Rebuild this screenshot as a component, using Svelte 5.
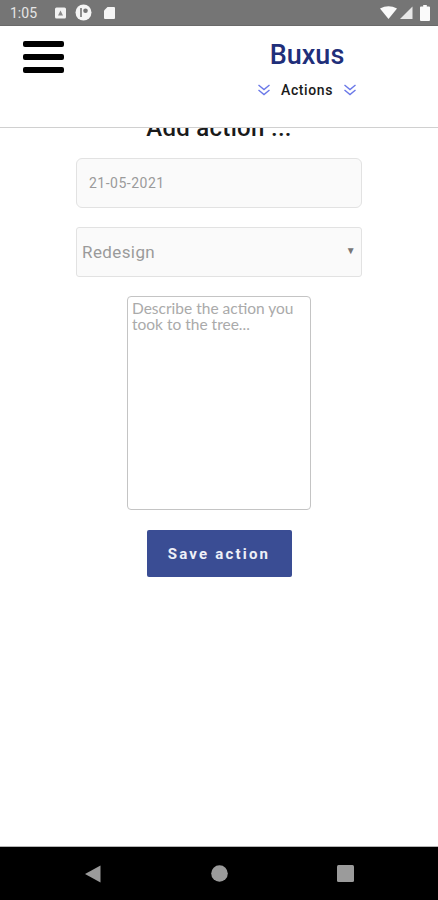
<script lang="ts">
	let date = '21-05-2021';
	let actionType = 'Redesign';
</script>

<div class="phone">
	<div class="status">
		<span class="time">1:05</span>
		<svg class="ico" width="14" height="14" viewBox="0 0 14 14">
			<rect x="1" y="1.5" width="11" height="11" rx="1.5" fill="#f2f2f2" />
			<path d="M6.5 4.5 L9 9.5 H4 Z" fill="#8a8a8a" />
		</svg>
		<svg class="ico" width="17" height="17" viewBox="0 0 17 17">
			<circle cx="8.5" cy="8.5" r="8" fill="#f5f5f5" />
			<path d="M6 4 V13" stroke="#757575" stroke-width="1.6" />
			<circle cx="10.5" cy="6.8" r="2.3" fill="#757575" />
		</svg>
		<svg class="card" width="13" height="14" viewBox="0 0 13 14">
			<path d="M4.5 1 H11 a1 1 0 0 1 1 1 V12 a1 1 0 0 1 -1 1 H2 a1 1 0 0 1 -1 -1 V4.5 Z" fill="#f5f5f5" />
		</svg>
		<span class="spacer"></span>
		<svg width="17" height="13" viewBox="0 0 17 13">
			<path d="M0 2.5 Q8.5 -2 17 2.5 L8.5 13 Z" fill="#fafafa" />
		</svg>
		<svg class="signal" width="13" height="13" viewBox="0 0 13 13">
			<path d="M12.5 0.5 V13 H0 Z" fill="#e8e8e8" />
		</svg>
		<svg class="battery" width="10" height="16" viewBox="0 0 10 16">
			<path d="M3.2 0 H6.8 V1.5 H9 a1 1 0 0 1 1 1 V15 a1 1 0 0 1 -1 1 H1 a1 1 0 0 1 -1 -1 V2.5 a1 1 0 0 1 1 -1 H3.2 Z" fill="#fafafa" />
		</svg>
	</div>

	<header>
		<div class="burger"><span></span><span></span><span></span></div>
		<div class="brand">
			<div class="title">Buxus</div>
			<div class="sub">
				<svg width="14" height="14" viewBox="0 0 14 14" fill="none" stroke="#6a78e8" stroke-width="1.4">
					<path d="M1.5 2 L7 6.5 L12.5 2" /><path d="M1.5 7 L7 11.5 L12.5 7" />
				</svg>
				<span>Actions</span>
				<svg width="14" height="14" viewBox="0 0 14 14" fill="none" stroke="#6a78e8" stroke-width="1.4">
					<path d="M1.5 2 L7 6.5 L12.5 2" /><path d="M1.5 7 L7 11.5 L12.5 7" />
				</svg>
			</div>
		</div>
	</header>

	<main>
		<h2>Add action ...</h2>
		<div class="field date">{date}</div>
		<div class="field select">
			<span>{actionType}</span>
			<i>▼</i>
		</div>
		<textarea placeholder="Describe the action you took to the tree..."></textarea>
		<button>Save action</button>
	</main>

	<nav>
		<svg width="17" height="18" viewBox="0 0 17 18"><path d="M16.5 0.5 V17.5 L1 9 Z" fill="#9b9b9b" /></svg>
		<svg width="17" height="17" viewBox="0 0 17 17"><circle cx="8.5" cy="8.5" r="8.3" fill="#9b9b9b" /></svg>
		<svg width="17" height="17" viewBox="0 0 17 17"><rect width="17" height="17" rx="1.5" fill="#9b9b9b" /></svg>
	</nav>
</div>

<style>
	:global(body) {
		margin: 0;
		background: #fff;
	}

	.phone {
		width: 438px;
		height: 900px;
		display: flex;
		flex-direction: column;
		overflow: hidden;
		font-family: Roboto, 'Liberation Sans', sans-serif;
	}

	.status {
		height: 26px;
		flex: none;
		box-sizing: border-box;
		background: #757575;
		border-bottom: 1px solid #6a6a6a;
		display: flex;
		align-items: center;
		padding: 0 8px 0 10px;
	}

	.time {
		color: #e6e6e6;
		font-size: 14px;
		width: 44px;
	}

	.ico {
		margin-right: 7px;
	}

	.card {
		margin-left: 4px;
	}

	.spacer {
		flex: 1;
	}

	.signal {
		margin-left: 3px;
		margin-right: 7px;
	}

	header {
		height: 102px;
		flex: none;
		box-sizing: border-box;
		border-bottom: 1px solid #d0d0d0;
		background: #fff;
		position: relative;
		z-index: 1;
		display: flex;
		padding: 15px 0 0 23px;
	}

	.burger {
		width: 41px;
		display: flex;
		flex-direction: column;
		gap: 7px;
	}

	.burger span {
		height: 6px;
		background: #000;
		border-radius: 2px;
	}

	.brand {
		margin-left: 191px;
		width: 104px;
		display: flex;
		flex-direction: column;
		align-items: center;
	}

	.title {
		color: #1f2f7a;
		font-size: 27px;
		font-weight: 500;
		line-height: 28px;
	}

	.sub {
		margin-top: 13px;
		display: flex;
		align-items: center;
		gap: 10px;
		font-size: 14px;
		font-weight: 500;
		letter-spacing: 0.6px;
		color: #1a1a1a;
		white-space: nowrap;
	}

	main {
		flex: 1;
		min-height: 0;
		overflow: hidden;
		display: flex;
		flex-direction: column;
		align-items: center;
		background: #fff;
	}

	h2 {
		margin: -14px 0 0;
		font-size: 24px;
		line-height: 28px;
		font-weight: 500;
		color: #1a1a1a;
		letter-spacing: 0.3px;
	}

	.field {
		width: 286px;
		height: 50px;
		flex: none;
		box-sizing: border-box;
		background: #fafafa;
		border: 1px solid #e2e2e2;
		border-radius: 6px;
		display: flex;
		align-items: center;
		color: #9a9a9a;
	}

	.date {
		margin-top: 16px;
		padding-left: 12px;
		font-size: 14px;
		letter-spacing: 0.5px;
	}

	.select {
		margin-top: 19px;
		padding: 0 5px;
		font-size: 17px;
		letter-spacing: 0.4px;
		justify-content: space-between;
		border-radius: 3px;
	}

	.select i {
		font-style: normal;
		font-size: 10px;
		color: #777;
		margin-bottom: 4px;
	}

	textarea {
		margin-top: 19px;
		width: 184px;
		height: 214px;
		flex: none;
		box-sizing: border-box;
		padding: 4px;
		border: 1.5px solid #c4c4c4;
		border-radius: 4px;
		background: #fff;
		font-family: Lato, 'Open Sans', sans-serif;
		font-size: 15.5px;
		line-height: 15.5px;
		resize: none;
		outline: none;
	}

	textarea::placeholder {
		color: #aaa;
		opacity: 1;
	}

	button {
		margin-top: 20px;
		width: 145px;
		height: 47px;
		flex: none;
		border: none;
		border-radius: 2px;
		background: #3a4d94;
		color: #eef0f8;
		font-family: Roboto, sans-serif;
		font-size: 15px;
		font-weight: 700;
		letter-spacing: 2.2px;
	}

	nav {
		height: 54px;
		flex: none;
		box-sizing: border-box;
		background: #000;
		border-top: 1px solid #b5b5b5;
		display: flex;
		align-items: center;
		padding: 0 84px;
		justify-content: space-between;
	}
</style>
